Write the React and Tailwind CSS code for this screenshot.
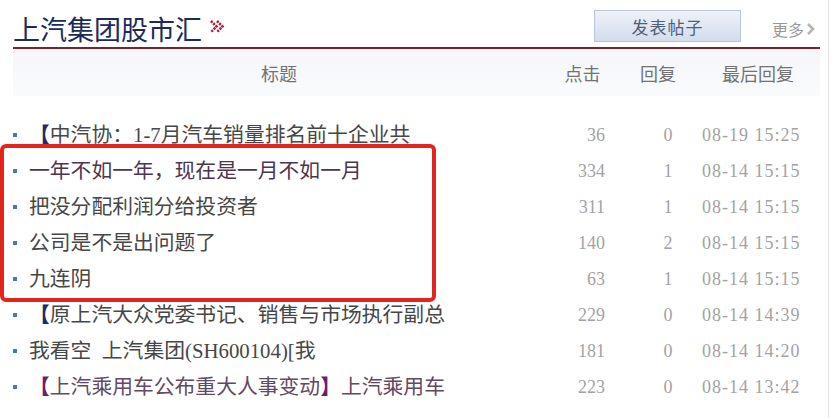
const rows = [
  { parts: [{ t: '【', c: 'text-[#1b2c63] font-bold' }, { t: '中汽协：1-7月汽车销量排名前十企业共' }], clicks: 36, replies: 0, last: '08-19 15:25' },
  { parts: [{ t: '一年不如一年，现在是一月不如一月', c: 'text-[#4d3550]' }], clicks: 334, replies: 1, last: '08-14 15:15' },
  { parts: [{ t: '把没分配利润分给投资者' }], clicks: 311, replies: 1, last: '08-14 15:15' },
  { parts: [{ t: '公司是不是出问题了' }], clicks: 140, replies: 2, last: '08-14 15:15' },
  { parts: [{ t: '九连阴' }], clicks: 63, replies: 1, last: '08-14 15:15' },
  { parts: [{ t: '【', c: 'text-[#1b2c63] font-bold' }, { t: '原上汽大众党委书记、销售与市场执行副总' }], clicks: 229, replies: 0, last: '08-14 14:39' },
  { parts: [{ t: '我看空  上汽集团(SH600104)[我' }], clicks: 181, replies: 0, last: '08-14 14:20' },
  {
    parts: [
      { t: '【', c: 'text-[#6b1d6e] font-bold' },
      { t: '上汽乘用车公布重大人事变动', c: 'text-[#614a64]' },
      { t: '】', c: 'text-[#6b1d6e] font-bold' },
      { t: '上汽乘用车', c: 'text-[#614a64]' },
    ],
    clicks: 223,
    replies: 0,
    last: '08-14 13:42',
  },
];

const serif = "font-['Liberation_Serif','Noto_Sans_CJK_SC',serif]";

function Chevrons() {
  return (
    <svg width="17" height="15" viewBox="0 0 17 15" className="mb-[8px] ml-[7px]">
      <g fill="none" stroke="#a3263b" strokeWidth="2.6" strokeDasharray="2.2 1">
        <polyline points="2,2 7.5,7.5 2,13" />
        <polyline points="8,2 13.5,7.5 8,13" />
      </g>
    </svg>
  );
}

function Row({ row }) {
  return (
    <div className="flex h-[36px] items-center">
      <div className="flex w-[532px] items-center">
        <span className="h-[4px] w-[4px] shrink-0 bg-[#4a78b5]" />
        <span className={`ml-[12px] whitespace-pre text-[20.8px] leading-none text-[#474747] ${serif}`}>
          {row.parts.map((p, i) => (
            <span key={i} className={p.c}>
              {p.t}
            </span>
          ))}
        </span>
      </div>
      <div className={`w-[75px] pr-[15px] text-right text-[18px] leading-none text-[#a3a3a3] ${serif}`}>{row.clicks}</div>
      <div className={`w-[76px] pl-[20px] text-center text-[18px] leading-none text-[#a3a3a3] ${serif}`}>{row.replies}</div>
      <div className={`w-[124px] whitespace-nowrap pl-[6px] text-[18px] leading-none tracking-[1px] text-[#a3a3a3] ${serif}`}>
        {row.last}
      </div>
    </div>
  );
}

export default function App() {
  return (
    <div className="relative h-[418px] w-[832px] overflow-hidden bg-white font-['Noto_Sans_CJK_SC',sans-serif]">
      <div className="h-full w-[829px] border-r border-[#e6e6e6]">
        <div className="ml-[13px] w-[807px]">
          {/* Title bar */}
          <div className="flex h-[49px] items-end border-b-2 border-[#7a2129] pb-[5px]">
            <h1 className="text-[27px] leading-none text-[#1c2b5c]">上汽集团股市汇</h1>
            <Chevrons />
            <div className="flex-1" />
            <button className="h-[32px] w-[147px] border border-[#b9c5d8] bg-gradient-to-b from-[#eef2f9] to-[#d3ddee] text-[17px] leading-none tracking-[1px] text-[#4f5e7a]">
              发表帖子
            </button>
            <div className="mb-[5px] ml-[31px] mr-[5px] flex items-center text-[16px] leading-none text-[#999]">
              更多
              <svg width="9" height="14" viewBox="0 0 9 14" className="ml-[2px]">
                <polyline points="2,2 7,7 2,12" fill="none" stroke="#b5b5b5" strokeWidth="2.6" />
              </svg>
            </div>
          </div>

          {/* Column header */}
          <div className="flex h-[47px] items-center bg-gradient-to-b from-[#f5f6f9] to-[#fafbfc] text-[18px] leading-none text-[#737373]">
            <div className="w-[532px] text-center">标题</div>
            <div className="w-[75px] text-center">点击</div>
            <div className="w-[76px] text-center">回复</div>
            <div className="w-[124px] text-center">最后回复</div>
          </div>

          {/* Rows */}
          <div className="mt-[21px]">
            {rows.map((row, i) => (
              <Row key={i} row={row} />
            ))}
          </div>
        </div>
      </div>

      {/* red highlight frame */}
      <div className="absolute left-0 top-[144px] h-[158px] w-[436px] rounded-[6px] border-[4px] border-[#e3261d]" />
    </div>
  );
}
